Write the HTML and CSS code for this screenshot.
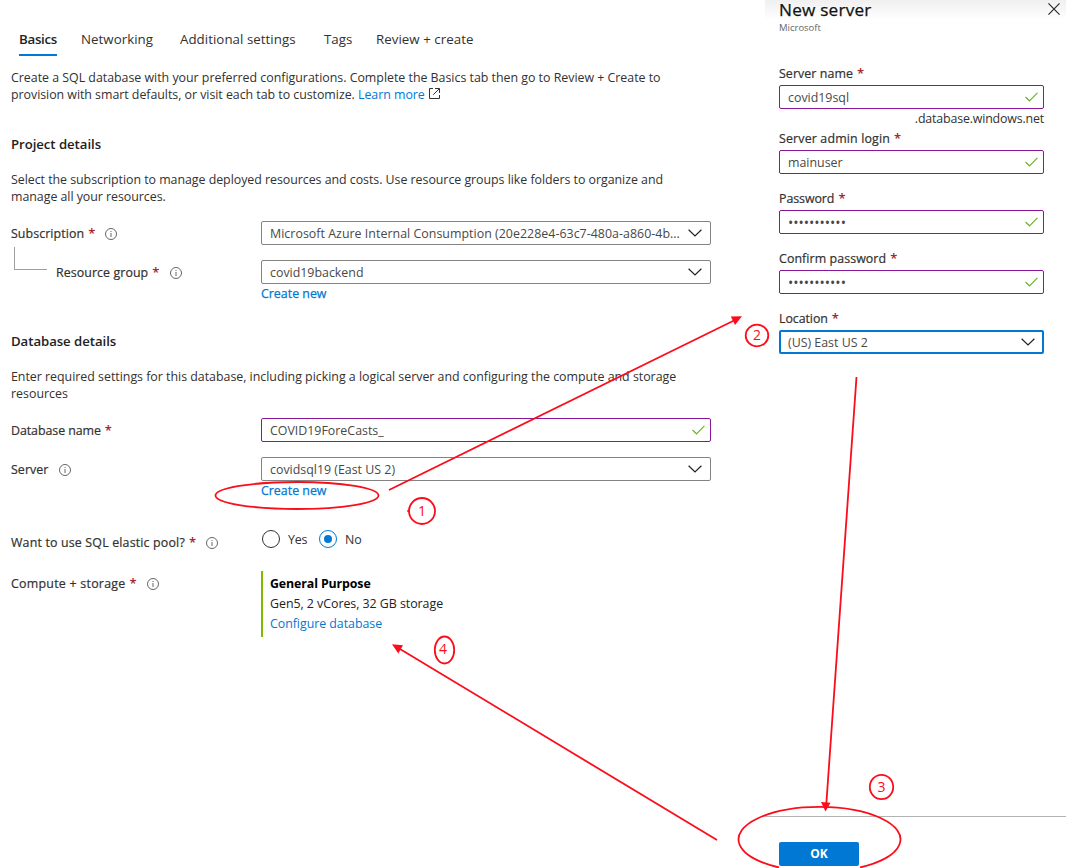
FILE: index.html
```html
<!DOCTYPE html>
<html lang="en">
<head>
<meta charset="utf-8">
<title>Create SQL Database</title>
<link rel="stylesheet" href="styles.css">
</head>
<body>
<svg class="defs" width="0" height="0">
  <symbol id="info" viewBox="0 0 12 12"><circle cx="6" cy="6" r="5.5" fill="none" stroke="#666"/><path d="M6 5v4" stroke="#666"/><path d="M6 3v1" stroke="#666"/></symbol>
  <symbol id="chev" viewBox="0 0 14 8"><path d="M.6.7 7 7 13.4.7" fill="none" stroke="#222" stroke-width="1.2"/></symbol>
  <symbol id="check" viewBox="0 0 13 10"><path d="M.5 5 4.5 8.8 12.4.8" fill="none" stroke="#6db52c" stroke-width="1.2"/></symbol>
</svg>
<div class="page">
  <main class="main">
    <nav class="tabs">
      <a class="tab active">Basics</a>
      <a class="tab">Networking</a>
      <a class="tab">Additional settings</a>
      <a class="tab">Tags</a>
      <a class="tab">Review + create</a>
    </nav>
    <p class="para intro"><span class="snug">Create a SQL database with your preferred configurations. Complete the Basics tab then go to Review + Create to</span><br><span class="snugger">provision with smart defaults, or visit each tab to customize. <a class="link">Learn more</a></span><svg class="ext" width="11" height="11" viewBox="0 0 11 11"><path d="M4 .5H.5v10h10V7M6 .5h4.500V5M10.300.7 4.200 6.800" fill="none" stroke="#333"/></svg></p>

    <h2 class="heading">Project details</h2>
    <p class="para"><span class="snugger">Select the subscription to manage deployed resources and costs. Use resource groups like folders to organize and<br>manage all your resources.</span></p>
    <div class="row first">
      <div class="label"><span>Subscription</span><b class="req">*</b><svg class="info"><use href="#info"/></svg></div>
      <div class="field"><span class="loose">Microsoft Azure Internal Consumption (20e228e4-63c7-480a-a860-4b...</span><svg class="chev"><use href="#chev"/></svg></div>
    </div>
    <div class="row">
      <div class="label child"><i class="elbow"></i><span>Resource group</span><b class="req">*</b><svg class="info"><use href="#info"/></svg></div>
      <div class="field"><span>covid19backend</span><svg class="chev"><use href="#chev"/></svg></div>
    </div>
    <a class="create">Create new</a>

    <h2 class="heading second">Database details</h2>
    <p class="para"><span class="snug">Enter required settings for this database, including picking a logical server and configuring the compute and storage</span><br>resources</p>
    <div class="row first">
      <div class="label tight"><span>Database name</span><b class="req">*</b></div>
      <div class="field valid"><span>COVID19ForeCasts_</span><svg class="check"><use href="#check"/></svg></div>
    </div>
    <div class="row">
      <div class="label"><span>Server</span><svg class="info"><use href="#info"/></svg></div>
      <div class="field"><span>covidsql19 (East US 2)</span><svg class="chev"><use href="#chev"/></svg></div>
    </div>
    <a class="create">Create new</a>

    <div class="row pool">
      <div class="label"><span>Want to use SQL elastic pool?</span><b class="req">*</b><svg class="info"><use href="#info"/></svg></div>
      <div class="radios"><i class="radio"></i><span>Yes</span><i class="radio on"></i><span>No</span></div>
    </div>
    <div class="row compute">
      <div class="label"><span>Compute + storage</span><b class="req">*</b><svg class="info"><use href="#info"/></svg></div>
      <div class="tier"><strong>General Purpose</strong><span>Gen5, 2 vCores, 32 GB storage</span><a class="link">Configure database</a></div>
    </div>
  </main>

  <aside class="panel">
    <header class="phead">
      <div><h1>New server</h1><small>Microsoft</small></div>
      <svg class="close" width="12" height="12" viewBox="0 0 13 13"><path d="M.5.5l12 12M12.500.5l-12 12" stroke="#222" stroke-width="1.2"/></svg>
    </header>
    <div class="form">
      <div class="plabel"><span>Server name</span><b class="req">*</b></div>
      <div class="field valid"><span>covid19sql</span><svg class="check"><use href="#check"/></svg></div>
      <div class="suffix">.database.windows.net</div>
      <div class="plabel admin"><span>Server admin login</span><b class="req">*</b></div>
      <div class="field valid"><span>mainuser</span><svg class="check"><use href="#check"/></svg></div>
      <div class="plabel gap tight"><span>Password</span><b class="req">*</b></div>
      <div class="field valid"><span class="dots">•••••••••••</span><svg class="check"><use href="#check"/></svg></div>
      <div class="plabel gap"><span>Confirm password</span><b class="req">*</b></div>
      <div class="field valid"><span class="dots">•••••••••••</span><svg class="check"><use href="#check"/></svg></div>
      <div class="plabel gap tight"><span>Location</span><b class="req">*</b></div>
      <div class="field focus"><span>(US) East US 2</span><svg class="chev"><use href="#chev"/></svg></div>
    </div>
    <footer class="pfoot"><button class="ok">OK</button></footer>
  </aside>

  <svg class="notes" width="1081" height="868" viewBox="0 0 1081 868">
    <g fill="none" stroke="#fb0d1b" stroke-width="1.800">
      <ellipse cx="297" cy="495.500" rx="81.500" ry="13.500"/>
      <path d="M389 490 734 320.500M856.500 377 826.300 804M717 840 400 649"/>
      <ellipse cx="422" cy="511" rx="13" ry="13"/>
      <ellipse cx="757" cy="335.500" rx="11.300" ry="10.800"/>
      <ellipse cx="881.500" cy="787" rx="11.700" ry="12.200"/>
      <ellipse cx="444.500" cy="650" rx="9.700" ry="13.500"/>
      <path d="M779 867.500A81 32.500 0 1 1 860 867.500"/>
    </g>
    <path d="M742 316.300 730.800 316.600 735 325zM825.500 811.500 821 802 830.500 802.700zM392 644.300 403 645.300 398.300 653.500z" fill="#fb0d1b"/>
    <circle cx="408.500" cy="511" r="1.300" fill="#fb0d1b"/>
    <g class="num"><text x="422" y="516">1</text><text x="757" y="340">2</text><text x="881.500" y="792">3</text><text x="443" y="654">4</text></g>
  </svg>
</div>
</body>
</html>
```
FILE: styles.css
```css
* { box-sizing: border-box; }
body { margin: 0; background: #fff; color: #323130; font: 12.4px/17px "Open Sans", "Noto Sans", sans-serif; }
.defs { position: absolute; }
.page { position: relative; display: flex; width: 1081px; height: 868px; overflow: hidden; }
.main { width: 765px; padding-left: 11px; }
.tabs { display: grid; grid-template-columns: 62px 99px 144px 52px auto; height: 56px; padding-left: 8px; font-size: 13.3px; letter-spacing: .04px; white-space: nowrap; }
.tab { justify-self: start; padding-top: 31px; height: 56px; }
.tab.active { font-weight: 600; letter-spacing: -.3px; color: #222; border-bottom: 2px solid #0078d4; }
.para { margin: 17px 0 0; height: 34px; white-space: nowrap; }
.para.intro { margin-top: 13px; }
.snug { letter-spacing: -.015px; }
.snugger { letter-spacing: -.038px; }
.loose { letter-spacing: .03px; }
.link { color: #0078d4; }
.ext { margin-left: 4px; vertical-align: 0; }
.heading { margin: 31px 0 0; font-size: 13.2px; line-height: 20px; font-weight: 600; letter-spacing: -.05px; color: #222; }
.heading.second { margin-top: 29px; }
.row { display: grid; grid-template-columns: 250px 450px; margin-top: 15px; white-space: nowrap; }
.row.first { margin-top: 16px; }
.label, .plabel { display: flex; align-items: center; letter-spacing: .08px; -webkit-text-stroke: .2px; }
.label.tight, .plabel.tight { letter-spacing: -.06px; }
.plabel.admin { letter-spacing: .16px; }
.req { color: #a4262c; margin-left: 4px; font-weight: 600; font-size: 13px; -webkit-text-stroke: 0; }
.info { width: 12px; height: 12px; margin: 1px 0 0 10px; }
.child { position: relative; padding-left: 45px; }
.elbow { position: absolute; left: 3px; top: -13px; width: 33px; height: 23px; border: solid #a19f9d; border-width: 0 0 1px 1px; }
.field { display: flex; align-items: center; justify-content: space-between; height: 24px; border: 1px solid #858381; border-radius: 2px; padding: 0 8px; color: #4a4847; white-space: nowrap; }
.field.valid { border-color: #881798; padding-right: 5px; }
.field.focus { border: 2px solid #0078d4; padding: 0 7px; }
.chev { width: 14px; height: 8px; }
.check { width: 13px; height: 10px; }
.create { display: block; width: 70px; margin: 2px 0 0 250px; line-height: 16px; color: #0078d4; -webkit-text-stroke: .25px; white-space: nowrap; }
.row.pool { margin-top: 30px; height: 20px; }
.pool .label { height: 20px; padding-top: 6px; letter-spacing: .17px; }
.radios { display: flex; align-items: center; height: 20px; }
.radios span { margin: 0 12px 0 8px; letter-spacing: -.25px; }
.radio { display: flex; align-items: center; justify-content: center; width: 18px; height: 18px; margin-left: 1px; border: 1px solid #323130; border-radius: 50%; }
.radio.on { margin-left: 0; border-color: #0078d4; }
.radio.on::after { content: ""; width: 8px; height: 8px; border-radius: 50%; background: #0078d4; }
.row.compute { margin-top: 22px; }
.compute .label { height: 25px; letter-spacing: .25px; }
.tier { display: flex; flex-direction: column; height: 66px; padding: 3px 0 0 7px; border-left: 2px solid #7fba00; line-height: 20px; letter-spacing: -.04px; color: #222; }
.tier strong { font-weight: 700; letter-spacing: -.12px; color: #000; }
.tier .link { color: #0078d4; }
.panel { width: 301px; display: flex; flex-direction: column; background: linear-gradient(#f0f0f0, #fff 20px); }
.phead { display: flex; justify-content: space-between; height: 65px; padding: 0 6px 0 14px; }
.phead h1 { margin: 0; font-size: 17.2px; line-height: 20px; font-weight: 400; letter-spacing: .2px; color: #111; -webkit-text-stroke: .25px; }
.phead small { display: block; font-size: 9.5px; line-height: 15px; color: #666; }
.close { margin-top: 3px; }
.form { width: 265px; margin-left: 14px; }
.plabel { height: 16px; margin-bottom: 4px; }
.plabel.gap { margin-top: 16px; }
.suffix { margin: 2px 0 3px; line-height: 16px; letter-spacing: -.17px; text-align: right; }
.dots { font-size: 14px; letter-spacing: 0; }
.pfoot { margin-top: auto; height: 52px; padding: 25px 0 0 14px; border-top: 1px solid #b3b3b3; }
.ok { display: block; width: 80px; height: 24px; padding: 0; border: 0; border-radius: 2px; background: #0078d4; color: #fff; font: 700 12px/24px "Open Sans", sans-serif; }
.notes { position: absolute; left: 0; top: 0; }
.num text { fill: #fb0d1b; font: 14px "Open Sans", sans-serif; text-anchor: middle; }
```
